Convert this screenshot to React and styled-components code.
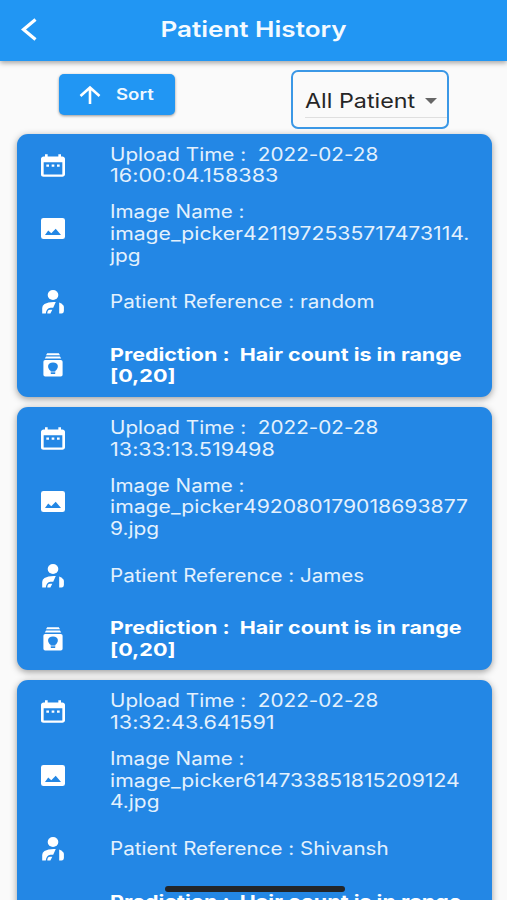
import React from 'react';
import styled, { createGlobalStyle } from 'styled-components'
import { MdDateRange } from 'react-icons/md'

const GlobalStyle = createGlobalStyle`
  body {
    margin: 0;
    background: #fafafa;
    font-family: Inter, "Liberation Sans", sans-serif;
    font-feature-settings: "calt" 0;
    overflow: hidden;
  }
`

const Screen = styled.div`
  display: flex;
  flex-direction: column;
  width: 507px;
  height: 900px;
  overflow: hidden;
  background: #fafafa;
`

const AppBar = styled.header`
  display: grid;
  grid-template-columns: 60px 1fr 60px;
  align-items: center;
  flex: none;
  height: 61px;
  padding-bottom: 3px;
  box-sizing: border-box;
  background: #2196f3;
  box-shadow: 0 2px 5px rgba(0, 0, 0, 0.35);
`

const BackIcon = styled.svg`
  width: 18px;
  height: 24px;
  margin-left: 20px;
`

const WideText = styled.span`
  display: block;
  white-space: pre;
  transform: scaleX(${props => props.$stretch || 1.16});
  transform-origin: ${props => props.$origin || 'left'} center;
`

const Title = styled.h1`
  margin: 0;
  font-size: 22px;
  font-weight: 560;
  line-height: 28px;
  text-align: center;
  color: #f4faff;
`

const Toolbar = styled.div`
  display: flex;
  flex: none;
  align-items: flex-start;
  justify-content: space-between;
  height: 72.6px;
  padding: 9px 58px 0 59px;
  box-sizing: border-box;
`

const SortButton = styled.button`
  display: flex;
  align-items: center;
  width: 116px;
  height: 41px;
  margin: 4px 0 0;
  padding: 0 0 0 20px;
  border: 0;
  border-radius: 5px;
  background: #2196f3;
  box-shadow: 0 1px 3px rgba(0, 0, 0, 0.4);
  color: #eff8ff;
  font: 600 15.5px/20px Inter, sans-serif;
`

const ArrowIcon = styled.svg`
  width: 22px;
  height: 20px;
  margin-right: 15px;
`

const Select = styled.div`
  width: 158px;
  height: 59px;
  box-sizing: border-box;
  padding: 13px 0 0 11.5px;
  border: 2px solid #3b98e6;
  border-radius: 7px;
`

const SelectValue = styled.div`
  display: flex;
  align-items: center;
  justify-content: space-between;
  height: 32px;
  padding: 0 10px 0 0;
  border-bottom: 1px solid #dfdfdf;
  font-size: 20px;
  line-height: 28px;
  color: #262626;
`

const Caret = styled.svg`
  width: 12px;
  height: 6px;
`

const List = styled.main`
  display: flex;
  flex-direction: column;
  gap: 10px;
  padding: 0 15px 0 16.5px;
`

const Card = styled.section`
  flex: none;
  height: 263.4px;
  box-sizing: border-box;
  padding: 10px 0 0 20.500px;
  border-radius: 11px;
  background: #2387e5;
  box-shadow: 0 2px 7px rgba(0, 0, 0, 0.38);
`

const Row = styled.div`
  display: grid;
  grid-template-columns: 32px 1fr;
  column-gap: 41px;
  align-items: start;
  margin-bottom: ${props => props.$after}px;
`

const RowIcon = styled.div`
  display: flex;
  justify-content: center;
  margin-top: ${props => props.$top}px;
  margin-bottom: -8px;
  color: #fff;
`

const CalendarIcon = styled(MdDateRange)`
  width: 32px;
  height: 27px;
`

const PictureSvg = styled.svg`
  width: 24px;
  height: 21px;
`

const PersonSvg = styled.svg`
  width: 22px;
  height: 24px;
`

const PredictionSvg = styled.svg`
  width: 20px;
  height: 24px;
`

const RowText = styled.div`
  font-size: 18px;
  line-height: 21.6px;
  font-weight: ${props => props.$bold ? 700 : 430};
  color: ${props => props.$bold ? '#fff' : '#e3f1fd'};
`

const HomeIndicator = styled.div`
  position: fixed;
  left: 165px;
  bottom: 8px;
  width: 180px;
  height: 6px;
  border-radius: 3px;
  background: #222529;
`

const records = [
  {
    time: ['2022-02-28', '16:00:04.158383'],
    image: ['image_picker4211972535717473114.', 'jpg'],
    patient: 'random',
  },
  {
    time: ['2022-02-28', '13:33:13.519498'],
    image: ['image_picker492080179018693877', '9.jpg'],
    patient: 'James',
  },
  {
    time: ['2022-02-28', '13:32:43.641591'],
    image: ['image_picker614733851815209124', '4.jpg'],
    patient: 'Shivansh',
  },
]

const PictureIcon = () => (
  <PictureSvg viewBox="0 0 24 21" fill="currentColor">
    <path fillRule="evenodd" d="M2.500 0H21.500Q24 0 24 2.300V18.700Q24 21 21.500 21H2.500Q0 21 0 18.700V2.300Q0 0 2.500 0ZM4 17H20L14.700 10.800L10.300 15.200L7.200 12.600Z" />
  </PictureSvg>
)

const PersonIcon = () => (
  <PersonSvg viewBox="0 0 22 24" fill="currentColor">
    <ellipse cx="11" cy="5" rx="5.3" ry="4.900" />
    <path d="M0.200 23.500V18Q0.200 15.300 2.500 14Q6.500 11.700 13.800 12.100L11.200 17.700H8.500Q4.300 18.200 3.800 23.500Z" />
    <path d="M5.300 23.500Q5.200 20 8 19.800H10.300L8.400 23.500Z" />
    <path d="M17.200 12.500Q21.900 14.500 21.900 17V20.500Q21.900 23.500 19.500 23.500H17.200Z" />
  </PersonSvg>
)

const PredictionIcon = () => (
  <PredictionSvg viewBox="0 0 20 24" fill="currentColor">
    <path d="M4.200 0.300H15.800L17 2.300H3ZM3 3.500H17L18.200 5.600H1.800Z" />
    <path fillRule="evenodd" d="M2.200 7H17.800Q19.600 7 19.600 8.800V21.800Q19.600 23.600 17.800 23.600H2.200Q0.400 23.600 0.400 21.800V8.800Q0.400 7 2.200 7ZM10 9.500C3.800 9.500 4 15.500 7.800 18V21H12.200V18C16 15.500 16.200 9.500 10 9.500Z" />
    <path d="M7.800 18.600H12.200V19.300H7.800Z" />
  </PredictionSvg>
)

const InfoRow = ({icon: Icon, lines, stretch, top, after, bold}) => {
  return (
    <Row $after={after}>
      <RowIcon $top={top}><Icon preserveAspectRatio="none" /></RowIcon>
      <RowText $bold={bold}>
        {lines.map((line, i) => <WideText key={line} $stretch={stretch[i]}>{line}</WideText>)}
      </RowText>
    </Row>
  )
}

const HistoryCard = ({record}) => {
  return (
    <Card>
      <InfoRow
        icon={CalendarIcon} top={8} after={14.6} stretch={[1.15, 1.2]}
        lines={[`Upload Time :  ${record.time[0]}`, record.time[1]]}
      />
      <InfoRow
        icon={PictureIcon} top={16.5} after={25} stretch={[1.145, 1.177, 1.16]}
        lines={['Image Name :', ...record.image]}
      />
      <InfoRow
        icon={PersonIcon} top={-1} after={31} stretch={[1.144]}
        lines={[`Patient Reference : ${record.patient}`]}
      />
      <InfoRow
        icon={PredictionIcon} top={9.5} after={0} bold stretch={[1.195, 1.2]}
        lines={['Prediction :  Hair count is in range', '[0,20]']}
      />
    </Card>
  )
}

const App = () => {
  return (
    <Screen>
      <GlobalStyle />
      <AppBar>
        <BackIcon viewBox="0 0 18 24" fill="none" stroke="#fff" strokeWidth="3.2">
          <path d="M15.500 2.500L3.500 12.500L15.500 22.500" />
        </BackIcon>
        <Title><WideText $origin="center" $stretch={1.185}>Patient History</WideText></Title>
      </AppBar>
      <Toolbar>
        <SortButton>
          <ArrowIcon viewBox="0 0 22 20" fill="none" stroke="#fff" strokeWidth="2.6">
            <path d="M11 19V3M1.500 11L11 2.500L20.500 11" />
          </ArrowIcon>
          <WideText $stretch={1.2}>Sort</WideText>
        </SortButton>
        <Select>
          <SelectValue>
            <WideText $stretch={1.165}>All Patient</WideText>
            <Caret viewBox="0 0 12 6"><path d="M0 0H12L6 6Z" fill="#666" /></Caret>
          </SelectValue>
        </Select>
      </Toolbar>
      <List>
        {records.map(record => <HistoryCard key={record.time[1]} record={record} />)}
      </List>
      <HomeIndicator />
    </Screen>
  )
}

export default App
